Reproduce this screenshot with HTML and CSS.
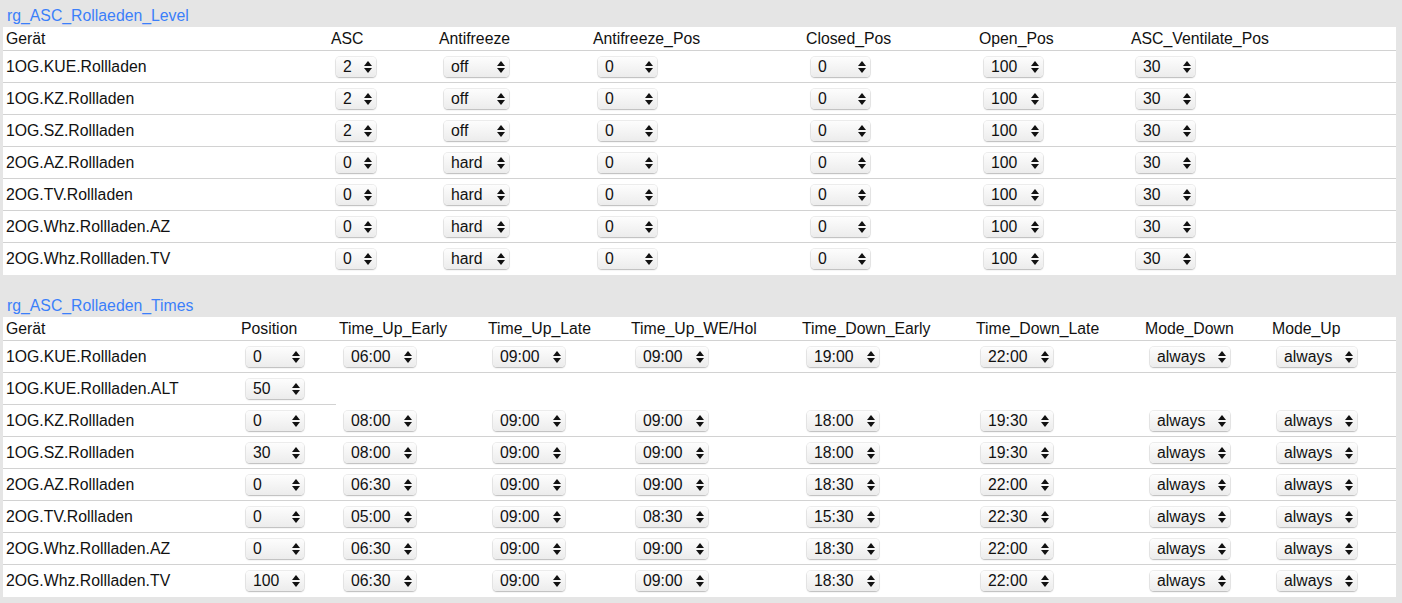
FILE: index.html
```html
<!DOCTYPE html>
<html lang="de">
<head>
    <meta charset="UTF-8">
    <title>ASC Rollläden</title>
    <link rel="stylesheet" href="styles.css">
</head>
<body>

    <!-- Gruppe: Level -->
    <div class="group">
        <div class="group-title"><a href="#">rg_ASC_Rollaeden_Level</a></div>
        <table class="rg level">
            <colgroup>
                <col class="c-dev"><col class="c-asc"><col class="c-af"><col class="c-afpos"><col class="c-closed"><col class="c-open"><col>
            </colgroup>
            <tr><th>Gerät</th><th>ASC</th><th>Antifreeze</th><th>Antifreeze_Pos</th><th>Closed_Pos</th><th>Open_Pos</th><th>ASC_Ventilate_Pos</th></tr>
            <tr><td>1OG.KUE.Rollladen</td><td><span class="sel w40">2</span></td><td><span class="sel w65">off</span></td><td><span class="sel w59">0</span></td><td><span class="sel w59">0</span></td><td><span class="sel w59">100</span></td><td><span class="sel w59">30</span></td></tr>
            <tr><td>1OG.KZ.Rollladen</td><td><span class="sel w40">2</span></td><td><span class="sel w65">off</span></td><td><span class="sel w59">0</span></td><td><span class="sel w59">0</span></td><td><span class="sel w59">100</span></td><td><span class="sel w59">30</span></td></tr>
            <tr><td>1OG.SZ.Rollladen</td><td><span class="sel w40">2</span></td><td><span class="sel w65">off</span></td><td><span class="sel w59">0</span></td><td><span class="sel w59">0</span></td><td><span class="sel w59">100</span></td><td><span class="sel w59">30</span></td></tr>
            <tr><td>2OG.AZ.Rollladen</td><td><span class="sel w40">0</span></td><td><span class="sel w65">hard</span></td><td><span class="sel w59">0</span></td><td><span class="sel w59">0</span></td><td><span class="sel w59">100</span></td><td><span class="sel w59">30</span></td></tr>
            <tr><td>2OG.TV.Rollladen</td><td><span class="sel w40">0</span></td><td><span class="sel w65">hard</span></td><td><span class="sel w59">0</span></td><td><span class="sel w59">0</span></td><td><span class="sel w59">100</span></td><td><span class="sel w59">30</span></td></tr>
            <tr><td>2OG.Whz.Rollladen.AZ</td><td><span class="sel w40">0</span></td><td><span class="sel w65">hard</span></td><td><span class="sel w59">0</span></td><td><span class="sel w59">0</span></td><td><span class="sel w59">100</span></td><td><span class="sel w59">30</span></td></tr>
            <tr><td>2OG.Whz.Rollladen.TV</td><td><span class="sel w40">0</span></td><td><span class="sel w65">hard</span></td><td><span class="sel w59">0</span></td><td><span class="sel w59">0</span></td><td><span class="sel w59">100</span></td><td><span class="sel w59">30</span></td></tr>
        </table>
    </div>

    <!-- Gruppe: Times -->
    <div class="group">
        <div class="group-title"><a href="#">rg_ASC_Rollaeden_Times</a></div>
        <table class="rg times">
            <colgroup>
                <col class="c-dev"><col class="c-pos"><col class="c-upe"><col class="c-upl"><col class="c-upwe"><col class="c-dne"><col class="c-dnl"><col class="c-mdn"><col>
            </colgroup>
            <tr><th>Gerät</th><th>Position</th><th>Time_Up_Early</th><th>Time_Up_Late</th><th>Time_Up_WE/Hol</th><th>Time_Down_Early</th><th>Time_Down_Late</th><th>Mode_Down</th><th>Mode_Up</th></tr>
            <tr><td>1OG.KUE.Rollladen</td><td><span class="sel w58">0</span></td><td><span class="sel w72">06:00</span></td><td><span class="sel w72">09:00</span></td><td><span class="sel w72">09:00</span></td><td><span class="sel w72">19:00</span></td><td><span class="sel w72">22:00</span></td><td><span class="sel w80">always</span></td><td><span class="sel w80">always</span></td></tr>
            <tr><td>1OG.KUE.Rollladen.ALT</td><td><span class="sel w58">50</span></td></tr>
            <tr><td>1OG.KZ.Rollladen</td><td><span class="sel w58">0</span></td><td><span class="sel w72">08:00</span></td><td><span class="sel w72">09:00</span></td><td><span class="sel w72">09:00</span></td><td><span class="sel w72">18:00</span></td><td><span class="sel w72">19:30</span></td><td><span class="sel w80">always</span></td><td><span class="sel w80">always</span></td></tr>
            <tr><td>1OG.SZ.Rollladen</td><td><span class="sel w58">30</span></td><td><span class="sel w72">08:00</span></td><td><span class="sel w72">09:00</span></td><td><span class="sel w72">09:00</span></td><td><span class="sel w72">18:00</span></td><td><span class="sel w72">19:30</span></td><td><span class="sel w80">always</span></td><td><span class="sel w80">always</span></td></tr>
            <tr><td>2OG.AZ.Rollladen</td><td><span class="sel w58">0</span></td><td><span class="sel w72">06:30</span></td><td><span class="sel w72">09:00</span></td><td><span class="sel w72">09:00</span></td><td><span class="sel w72">18:30</span></td><td><span class="sel w72">22:00</span></td><td><span class="sel w80">always</span></td><td><span class="sel w80">always</span></td></tr>
            <tr><td>2OG.TV.Rollladen</td><td><span class="sel w58">0</span></td><td><span class="sel w72">05:00</span></td><td><span class="sel w72">09:00</span></td><td><span class="sel w72">08:30</span></td><td><span class="sel w72">15:30</span></td><td><span class="sel w72">22:30</span></td><td><span class="sel w80">always</span></td><td><span class="sel w80">always</span></td></tr>
            <tr><td>2OG.Whz.Rollladen.AZ</td><td><span class="sel w58">0</span></td><td><span class="sel w72">06:30</span></td><td><span class="sel w72">09:00</span></td><td><span class="sel w72">09:00</span></td><td><span class="sel w72">18:30</span></td><td><span class="sel w72">22:00</span></td><td><span class="sel w80">always</span></td><td><span class="sel w80">always</span></td></tr>
            <tr><td>2OG.Whz.Rollladen.TV</td><td><span class="sel w58">100</span></td><td><span class="sel w72">06:30</span></td><td><span class="sel w72">09:00</span></td><td><span class="sel w72">09:00</span></td><td><span class="sel w72">18:30</span></td><td><span class="sel w72">22:00</span></td><td><span class="sel w80">always</span></td><td><span class="sel w80">always</span></td></tr>
        </table>
    </div>

</body>
</html>
```

FILE: styles.css
```css
* { margin: 0; padding: 0; box-sizing: border-box; font-family: "Liberation Sans", Arial, sans-serif; }
body { background: #e5e5e5; padding-left: 3px; font-size: 15.8px; color: #111; }

.group { width: 1393px; }
.group + .group { margin-top: 15px; }

.group-title {
    height: 27px;
    line-height: 19px;
    padding: 6px 0 2px 4px;
}

.group-title a {
    color: #3b7ffa;
    text-decoration: none;
}

/* readingsGroup Tabelle */
.rg {
    width: 100%;
    table-layout: fixed;
    border-collapse: separate;
    border-spacing: 0;
    background: #fff;
}

.rg th, .rg td {
    padding: 0 3px;
    text-align: left;
    font-weight: normal;
    vertical-align: middle;
    border-bottom: 1px solid #d2d2d2;
    white-space: nowrap;
}

.rg th { height: 24px; }
.rg td { height: 32px; }
.rg tr:last-child td { border-bottom: none; }

.level .c-dev { width: 325px; }
.level .c-asc { width: 108px; }
.level .c-af { width: 154px; }
.level .c-afpos { width: 213px; }
.level .c-closed { width: 173px; }
.level .c-open { width: 152px; }

.times .c-dev { width: 235px; }
.times .c-pos { width: 98px; }
.times .c-upe { width: 149px; }
.times .c-upl { width: 143px; }
.times .c-upwe { width: 171px; }
.times .c-dne { width: 174px; }
.times .c-dnl { width: 169px; }
.times .c-mdn { width: 127px; }

/* Auswahlfeld im Mac-Stil */
.sel {
    display: inline-block;
    position: relative;
    height: 20px;
    line-height: 20px;
    margin-left: 5px;
    padding-left: 7px;
    border-radius: 4px;
    background: linear-gradient(#fdfdfd, #ececec);
    box-shadow: 0 0 0 1px rgba(0, 0, 0, 0.07), 0 1px 1.5px rgba(0, 0, 0, 0.22);
    color: #111;
    vertical-align: middle;
}

.sel::before, .sel::after {
    content: '';
    position: absolute;
    right: 4px;
    border-left: 4px solid transparent;
    border-right: 4px solid transparent;
}

.sel::before { top: 4px; border-bottom: 5px solid #111; }
.sel::after { top: 11px; border-top: 5px solid #111; }

.w40 { width: 40px; }
.w58 { width: 58px; }
.w59 { width: 59px; }
.w65 { width: 65px; }
.w72 { width: 72px; }
.w80 { width: 80px; }
```
